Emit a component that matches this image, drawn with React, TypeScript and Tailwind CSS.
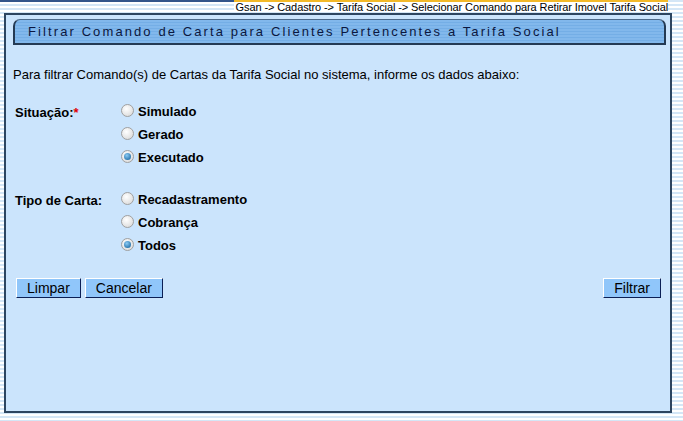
const situacoes = [
  { label: "Simulado", checked: false },
  { label: "Gerado", checked: false },
  { label: "Executado", checked: true },
];

const tipos = [
  { label: "Recadastramento", checked: false },
  { label: "Cobrança", checked: false },
  { label: "Todos", checked: true },
];

function Radio({ checked }: { checked: boolean }) {
  return (
    <span className="flex h-[13px] w-[13px] items-center justify-center rounded-full border border-[#a0a0a0] bg-[radial-gradient(circle_at_40%_35%,#ffffff,#d4d4d4)]">
      {checked && <span className="h-[7px] w-[7px] rounded-full bg-[radial-gradient(circle_at_40%_35%,#8ccbf4,#0a5a96)]" />}
    </span>
  );
}

function Group({ label, items, required }: { label: string; items: { label: string; checked: boolean }[]; required?: boolean }) {
  return (
    <div className="flex">
      <div className="w-[106px] pt-[1px] font-bold">
        {label}
        {required && <span className="text-[#e00000]">*</span>}
      </div>
      <div className="flex flex-col gap-[5px]">
        {items.map((item) => (
          <label key={item.label} className="flex h-[18px] items-center gap-[4px] font-bold">
            <Radio checked={item.checked} />
            <span className="pt-[2px]">{item.label}</span>
          </label>
        ))}
      </div>
    </div>
  );
}

function Button({ children }: { children: string }) {
  return (
    <button className="h-[20px] border border-t-white border-l-white border-r-[#0b1f55] border-b-[#0b1f55] bg-[#90c6fa] px-[10px] text-[14px] leading-none text-black">
      {children}
    </button>
  );
}

export default function App() {
  return (
    <div className="h-[421px] w-[683px] overflow-hidden bg-[repeating-linear-gradient(to_bottom,#d4e6f6_0px,#d4e6f6_2px,#ffffff_2px,#ffffff_4px)] font-['Liberation_Sans',Arial,sans-serif] text-[13px] text-black">
      <div className="relative h-[13px]">
        <div className="h-[2px] w-[236px] bg-[#34558a]" />
        <div className="absolute right-[15px] top-0 flex h-[12px] items-start border-t-[2px] border-[#f3b928] bg-white pl-[2px] text-[11px] leading-[10px] tracking-[-0.1px] text-black">
          Gsan -&gt; Cadastro -&gt; Tarifa Social -&gt; Selecionar Comando para Retirar Imovel Tarifa Social
        </div>
      </div>
      <div className="ml-[4px] flex h-[400px] w-[668px] flex-col border-2 border-[#2d4560] bg-[#cbe4fc] pl-[7px] pr-[4px] pt-[4px]">
        <div className="flex h-[26px] items-center rounded-t-[7px] border-2 border-t border-[#243a54] border-t-[#4d6a8a] bg-[repeating-linear-gradient(to_bottom,#82b8ec_0px,#82b8ec_2px,#74aee6_2px,#74aee6_3px)] pl-[13px] text-[13px] tracking-[2.1px] text-[#0b1740]">
          Filtrar Comando de Carta para Clientes Pertencentes a Tarifa Social
        </div>
        <p className="mt-[20px]">Para filtrar Comando(s) de Cartas da Tarifa Social no sistema, informe os dados abaixo:</p>
        <div className="mt-[17px] pl-[2px]">
          <Group label="Situação:" items={situacoes} required />
        </div>
        <div className="mt-[24px] pl-[2px]">
          <Group label="Tipo de Carta:" items={tipos} />
        </div>
        <div className="mt-[24px] flex items-center justify-between pl-[3px] pr-[5px]">
          <div className="flex gap-[4px]">
            <Button>Limpar</Button>
            <Button>Cancelar</Button>
          </div>
          <Button>Filtrar</Button>
        </div>
      </div>
    </div>
  );
}
